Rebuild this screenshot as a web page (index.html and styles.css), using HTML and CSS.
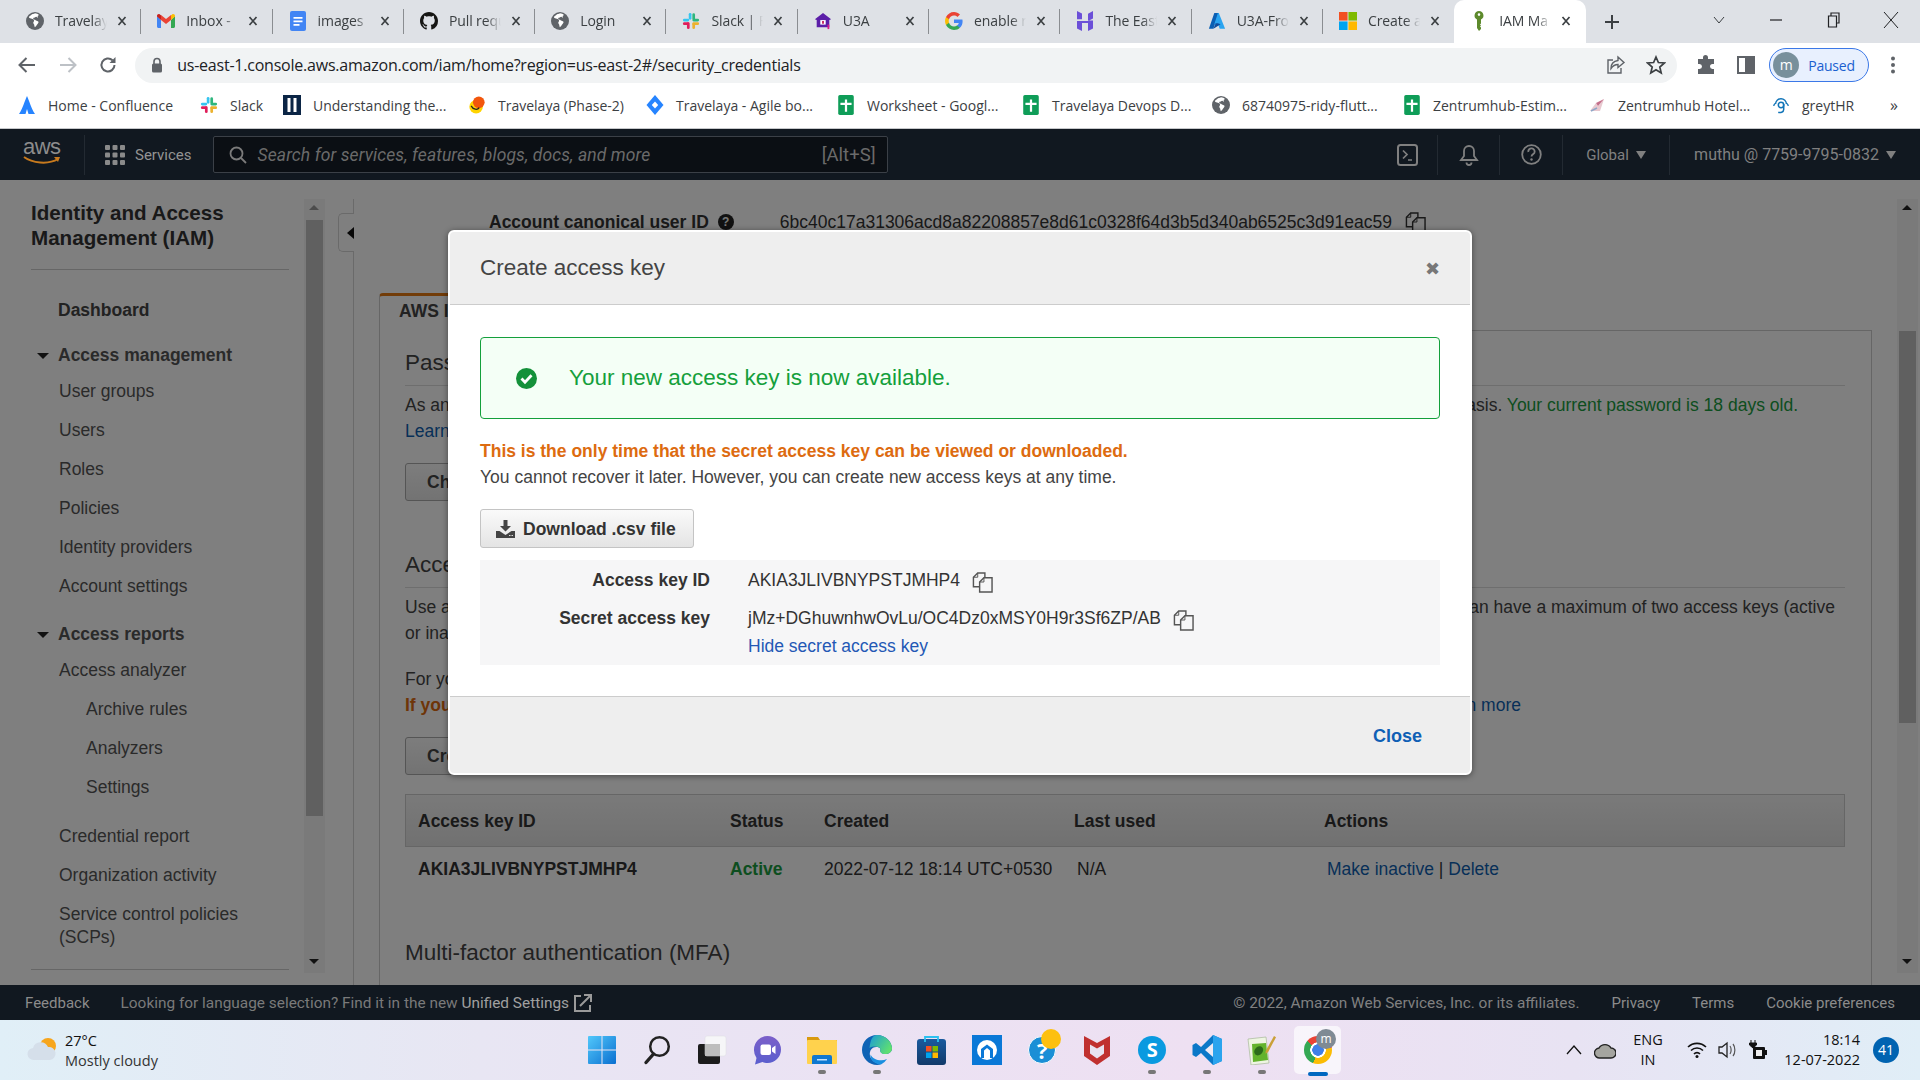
FILE: index.html
```html
<!DOCTYPE html>
<html lang="en">
<head>
<meta charset="utf-8">
<title>IAM Management Console</title>
<link rel="stylesheet" href="styles.css">
</head>
<body>
<svg class="defs" width="0" height="0" aria-hidden="true">
<defs>
<symbol id="i-globe" viewBox="0 0 16 16"><circle cx="8" cy="8" r="8" fill="#5f6368"/><path d="M8 1.2c-1 .8-2.6.6-3.4 1.5-.6.8-1.9 1-2 2 .5 1 1.6 1.1 2.6 1.4.9.3 1.8.5 2 1.5.1.9-.9 1.3-.7 2.2.2.9 1 1.3.9 2.3 0 .5.1 1.1.5 1.4.9-.6 1.4-1.5 2-2.4.5-.7 1.3-1.2 1.2-2.2-.1-.8-1-.9-1.7-1.2-.7-.3-1.2-1-2-.9-.4-.5-1.2-.8-1-1.5.6-.3 1.3 0 1.7-.6.4-.5 1-.7 1.4-.2l1 .5c.4-.5-.2-1-.2-1.5.4-.3.9-.5 1.2-.9C10.700 2 9.300 1.300 8 1.200z" fill="#fff"/></symbol>
<symbol id="i-gmail" viewBox="0 0 18 14"><path d="M0 2v10.500C0 13.300.7 14 1.500 14H4V6L0 2z" fill="#4285f4"/><path d="M18 2v10.500c0 .8-.7 1.500-1.500 1.500H14V6l4-4z" fill="#34a853"/><path d="M4 6V1L9 5l5-4v5l-5 4-5-4z" fill="#ea4335"/><path d="M0 2.500V1.800C0 .3 1.700-.5 2.900.4L4 1.200V6L0 2.500z" fill="#c5221f"/><path d="M18 2.500V1.800c0-1.500-1.700-2.300-2.900-1.400L14 1.200V6l4-3.500z" fill="#fbbc04"/></symbol>
<symbol id="i-docs" viewBox="0 0 16 20"><rect width="16" height="20" rx="2" fill="#4285f4"/><path d="M3.500 6h9v1.700h-9zM3.500 9.500h9v1.700h-9zM3.500 13h6v1.700h-6z" fill="#fff"/></symbol>
<symbol id="i-github" viewBox="0 0 16 16"><path fill="#161614" d="M8 0C3.580 0 0 3.580 0 8c0 3.540 2.290 6.530 5.470 7.590.4.070.55-.17.55-.38 0-.19-.01-.82-.01-1.490-2.010.37-2.530-.49-2.690-.94-.09-.23-.48-.94-.82-1.130-.28-.15-.68-.52-.01-.53.63-.01 1.080.58 1.230.82.72 1.210 1.870.87 2.330.66.07-.52.28-.87.51-1.070-1.780-.2-3.640-.89-3.640-3.950 0-.87.31-1.590.82-2.150-.08-.2-.36-1.020.08-2.120 0 0 .67-.21 2.200.82.64-.18 1.320-.27 2-.27.68 0 1.360.09 2 .27 1.530-1.040 2.200-.82 2.200-.82.44 1.100.16 1.920.08 2.120.51.56.82 1.270.82 2.150 0 3.070-1.870 3.750-3.650 3.950.29.25.54.73.54 1.480 0 1.070-.01 1.930-.01 2.200 0 .21.15.46.55.38A8.013 8.013 0 0016 8c0-4.420-3.580-8-8-8z"/></symbol>
<symbol id="i-slack" viewBox="0 0 20 20"><rect x="7.500" y="1" width="3" height="7.500" rx="1.500" fill="#36c5f0"/><rect x="1" y="7.500" width="7" height="3" rx="1.500" fill="#36c5f0"/><rect x="11.500" y="1.500" width="3" height="7" rx="1.500" fill="#2eb67d"/><rect x="11.500" y="7.500" width="7.500" height="3" rx="1.500" fill="#2eb67d"/><rect x="11.500" y="11.500" width="7.500" height="3" rx="1.500" fill="#ecb22e"/><rect x="11.500" y="12" width="3" height="7" rx="1.500" fill="#ecb22e"/><rect x="1" y="11.500" width="7" height="3" rx="1.500" fill="#e01e5a"/><rect x="5.500" y="11.500" width="3" height="7.500" rx="1.500" fill="#e01e5a"/></symbol>
<symbol id="i-u3a" viewBox="0 0 20 20"><path d="M10 1L1 8l2 1v8h14V9l2-1z" fill="#5b1ea8"/><path d="M7 9h6v5H7z" fill="#fff"/><path d="M9 10h2v3H9z" fill="#c2185b"/><path d="M15 14h2v5h-2z" fill="#d81b8c"/></symbol>
<symbol id="i-google" viewBox="0 0 18 18"><path d="M17.600 9.200c0-.6-.1-1.200-.2-1.800H9v3.500h4.800c-.2 1.100-.8 2-1.800 2.700v2.200h2.900c1.700-1.600 2.700-3.900 2.700-6.600z" fill="#4285f4"/><path d="M9 18c2.400 0 4.500-.8 5.900-2.200L12 13.600c-.8.500-1.800.9-3 .9-2.300 0-4.300-1.600-5-3.700H1v2.300C2.500 16 5.500 18 9 18z" fill="#34a853"/><path d="M4 10.700c-.4-1.100-.4-2.300 0-3.400V5H1c-1.300 2.500-1.300 5.500 0 8l3-2.300z" fill="#fbbc05"/><path d="M9 3.600c1.300 0 2.500.5 3.400 1.300L15 2.400C13.400.9 11.300 0 9 0 5.500 0 2.500 2 1 5l3 2.300c.7-2.100 2.700-3.700 5-3.700z" fill="#ea4335"/></symbol>
<symbol id="i-host" viewBox="0 0 18 20"><path d="M1 0l5 2.600v5.600H1zM17 0v7.500l-5 2.500H1v2h11V20l5-2.600V9.500h-5V2.700zM1 11.500V17.600L6 20v-8.500z" fill="#6b4fd8"/></symbol>
<symbol id="i-azure" viewBox="0 0 20 20"><path d="M7 1h5L6 18.500H1z" fill="#0a5fb4"/><path d="M12 1l7 17.500h-6l-1.800-5H7l4-12.500z" fill="#2aa4f0"/><path d="M6 18.500l8-5-3-1H8.500z" fill="#0f4e9e"/></symbol>
<symbol id="i-ms" viewBox="0 0 20 20"><rect width="9.500" height="9.500" fill="#f25022"/><rect x="10.500" width="9.500" height="9.500" fill="#7fba00"/><rect y="10.500" width="9.500" height="9.500" fill="#00a4ef"/><rect x="10.500" y="10.500" width="9.500" height="9.500" fill="#ffb900"/></symbol>
<symbol id="i-key" viewBox="0 0 12 20"><path d="M6 0a4.500 4.500 0 00-2 8.500V17l2 3 2-2v-1.500l-1-1 1-1-1-1 1-1V8.500A4.500 4.500 0 006 0zm0 2.300a1.300 1.300 0 110 2.600 1.300 1.300 0 010-2.600z" fill="#5d8a2c"/></symbol>
<symbol id="i-close" viewBox="0 0 10 10"><path d="M1.500 1l7 8M8.500 1l-7 8" stroke="#3c4043" stroke-width="1.700" fill="none"/></symbol>
<symbol id="i-sheet" viewBox="0 0 14 18"><rect width="14" height="18" rx="1.500" fill="#0f9d58"/><path d="M6 4h2v3h4v2H8v6H6V9H2V7h4z" fill="#fff"/></symbol>
<symbol id="i-conf" viewBox="0 0 18 20"><path d="M9 1c2 4 4 12 8 18h-6.500L9 14l-1.500 5H1C5 13 7 5 9 1z" fill="#2684ff"/></symbol>
<symbol id="i-under" viewBox="0 0 18 20"><rect width="18" height="20" fill="#0b2545"/><rect x="4.500" y="3" width="3" height="14" fill="#fff"/><rect x="10.500" y="3" width="3" height="14" fill="#fff"/></symbol>
<symbol id="i-trav" viewBox="0 0 20 20"><circle cx="9" cy="12" r="7.500" fill="#ffd400"/><circle cx="12" cy="7" r="6.500" fill="#f2560c"/><path d="M3.500 11c2 4 7 5 9 2" stroke="#222" stroke-width="1.400" fill="none"/></symbol>
<symbol id="i-jira" viewBox="0 0 18 20"><path d="M9 0l8.500 10L9 20 .5 10z" fill="#2684ff"/><path d="M9 6.500l3.200 3.500L9 13.500 5.800 10z" fill="#fff"/></symbol>
<symbol id="i-hotel" viewBox="0 0 18 16"><path d="M2 14L8 6l2 3 6-7-4 12z" fill="#e8c9d0"/><path d="M8 6l8-4-6 7z" fill="#c46f8a"/><path d="M3 14l6-3" stroke="#8fa8c8" stroke-width="1.500"/></symbol>
<symbol id="i-grey" viewBox="0 0 20 20"><path d="M4 9a6 6 0 0112 0M2 11c0-2 1-2 2-3M18 11c0-2-1-2-2-3" stroke="#1275b8" stroke-width="1.500" fill="none"/><circle cx="10" cy="10" r="3" fill="none" stroke="#1275b8" stroke-width="1.700"/><path d="M13 9v6c0 3-4 4-6 3" stroke="#1275b8" stroke-width="1.700" fill="none"/></symbol>
<symbol id="i-copy" viewBox="0 0 22 22"><path d="M8 16H1.500V6L6 1.500h7.500V6" fill="none" stroke="currentColor" stroke-width="1.500"/><path d="M6 1.500V6H1.500" fill="none" stroke="currentColor" stroke-width="1"/><path d="M8 11l4.500-4.500h8.500v15H8z" fill="none" stroke="currentColor" stroke-width="1.500"/><path d="M12.500 6.500V11H8" fill="none" stroke="currentColor" stroke-width="1"/></symbol>
</defs>
</svg>

<div class="chrome-tabs">
  <div class="tab-list">
    <div class="tab"><svg class="tab-ico"><use href="#i-globe"/></svg><span class="tab-label">Travelaya</span><svg class="tab-x"><use href="#i-close"/></svg></div>
    <div class="tab"><svg class="tab-ico"><use href="#i-gmail"/></svg><span class="tab-label">Inbox - </span><svg class="tab-x"><use href="#i-close"/></svg></div>
    <div class="tab"><svg class="tab-ico"><use href="#i-docs"/></svg><span class="tab-label">images</span><svg class="tab-x"><use href="#i-close"/></svg></div>
    <div class="tab"><svg class="tab-ico"><use href="#i-github"/></svg><span class="tab-label">Pull request</span><svg class="tab-x"><use href="#i-close"/></svg></div>
    <div class="tab"><svg class="tab-ico"><use href="#i-globe"/></svg><span class="tab-label">Login</span><svg class="tab-x"><use href="#i-close"/></svg></div>
    <div class="tab"><svg class="tab-ico"><use href="#i-slack"/></svg><span class="tab-label">Slack | F</span><svg class="tab-x"><use href="#i-close"/></svg></div>
    <div class="tab"><svg class="tab-ico"><use href="#i-u3a"/></svg><span class="tab-label">U3A</span><svg class="tab-x"><use href="#i-close"/></svg></div>
    <div class="tab"><svg class="tab-ico"><use href="#i-google"/></svg><span class="tab-label">enable r</span><svg class="tab-x"><use href="#i-close"/></svg></div>
    <div class="tab"><svg class="tab-ico"><use href="#i-host"/></svg><span class="tab-label">The East</span><svg class="tab-x"><use href="#i-close"/></svg></div>
    <div class="tab"><svg class="tab-ico"><use href="#i-azure"/></svg><span class="tab-label">U3A-Front</span><svg class="tab-x"><use href="#i-close"/></svg></div>
    <div class="tab tab-prev"><svg class="tab-ico"><use href="#i-ms"/></svg><span class="tab-label">Create a</span><svg class="tab-x"><use href="#i-close"/></svg></div>
    <div class="tab tab-active"><svg class="tab-ico"><use href="#i-key"/></svg><span class="tab-label">IAM Ma</span><svg class="tab-x"><use href="#i-close"/></svg></div>
  </div>
  <div class="newtab"><svg width="16" height="16" viewBox="0 0 16 16"><path d="M8 1v14M1 8h14" stroke="#3c4043" stroke-width="2"/></svg></div>
  <div class="winctl">
    <span class="wc"><svg width="14" height="14" viewBox="0 0 14 14"><path d="M2 4l5 6 5-6" stroke="#3c4043" fill="none"/></svg></span>
    <span class="wc"><svg width="14" height="14" viewBox="0 0 14 14"><path d="M1 7h12" stroke="#202124" stroke-width="1.200"/></svg></span>
    <span class="wc"><svg width="14" height="16" viewBox="0 0 14 16"><path d="M1.500 4h8v11h-8zM4 4V1h8v10h-2.500" stroke="#202124" stroke-width="1.200" fill="none"/></svg></span>
    <span class="wc"><svg width="16" height="18" viewBox="0 0 16 18"><path d="M1 1l14 16M15 1L1 17" stroke="#202124" stroke-width="1"/></svg></span>
  </div>
</div>

<div class="toolbar">
  <span class="tb-btn"><svg width="18" height="16" viewBox="0 0 18 16"><path d="M17 8H2M8.500 1L1.500 8l7 7" stroke="#5f6368" stroke-width="2" fill="none"/></svg></span>
  <span class="tb-btn"><svg width="18" height="16" viewBox="0 0 18 16"><path d="M1 8h15M9.500 1l7 7-7 7" stroke="#bdc1c6" stroke-width="2" fill="none"/></svg></span>
  <span class="tb-btn"><svg width="18" height="18" viewBox="0 0 18 18"><path d="M15.500 9a6.500 6.500 0 11-2-4.700" stroke="#5f6368" stroke-width="2" fill="none"/><path d="M16.500 1v6h-6z" fill="#5f6368"/></svg></span>
  <div class="omnibox">
    <svg class="lock" width="14" height="16" viewBox="0 0 14 16"><path d="M4 7V4.500a3 3 0 016 0V7" stroke="#5f6368" stroke-width="1.600" fill="none"/><rect x="2" y="6.500" width="10" height="9" rx="1.500" fill="#5f6368"/></svg>
    <span class="url">us-east-1.console.aws.amazon.com/iam/home?region=us-east-2#/security_credentials</span>
    <span class="omni-end">
      <svg width="20" height="20" viewBox="0 0 20 20"><path d="M7 5H2v13h13v-5" stroke="#5f6368" stroke-width="1.400" fill="none"/><path d="M12 2l6 5.500-6 5V9.500c-3 0-5 1-7 4 0-5 3-7.500 7-8z" stroke="#5f6368" stroke-width="1.400" fill="none"/></svg>
      <svg width="20" height="20" viewBox="0 0 20 20"><path d="M10 2l2.400 5.500 6 .5-4.600 4 1.400 6-5.200-3.200L4.800 18l1.400-6L1.600 8l6-.5z" stroke="#3c4043" stroke-width="1.700" fill="none"/></svg>
    </span>
  </div>
  <svg class="puzzle" width="20" height="20" viewBox="0 0 20 20"><path d="M7 2.500a2.500 2.500 0 015 0V4h6v5h-1.500a2.500 2.500 0 000 5H18v5H2v-5h1.500a2.500 2.500 0 000-5H2V4h5z" fill="#5f6368"/></svg>
  <svg class="sidep" width="20" height="20" viewBox="0 0 20 20"><rect x="2" y="2" width="16" height="16" fill="none" stroke="#5f6368" stroke-width="2"/><rect x="9" y="2" width="9" height="16" fill="#5f6368"/><rect x="4" y="4" width="5" height="12" fill="#fff"/></svg>
  <div class="profile"><span class="avatar">m</span><span class="paused">Paused</span></div>
  <svg class="dots" width="6" height="18" viewBox="0 0 6 18"><circle cx="3" cy="2.500" r="2" fill="#5f6368"/><circle cx="3" cy="9" r="2" fill="#5f6368"/><circle cx="3" cy="15.500" r="2" fill="#5f6368"/></svg>
</div>

<div class="bookmarks">
  <a class="bm"><svg class="bm-ico"><use href="#i-conf"/></svg>Home - Confluence</a>
  <a class="bm"><svg class="bm-ico"><use href="#i-slack"/></svg>Slack</a>
  <a class="bm"><svg class="bm-ico"><use href="#i-under"/></svg>Understanding the...</a>
  <a class="bm"><svg class="bm-ico"><use href="#i-trav"/></svg>Travelaya (Phase-2)</a>
  <a class="bm"><svg class="bm-ico"><use href="#i-jira"/></svg>Travelaya - Agile bo...</a>
  <a class="bm"><svg class="bm-ico"><use href="#i-sheet"/></svg>Worksheet - Googl...</a>
  <a class="bm"><svg class="bm-ico"><use href="#i-sheet"/></svg>Travelaya Devops D...</a>
  <a class="bm"><svg class="bm-ico"><use href="#i-globe"/></svg>68740975-ridy-flutt...</a>
  <a class="bm"><svg class="bm-ico"><use href="#i-sheet"/></svg>Zentrumhub-Estim...</a>
  <a class="bm"><svg class="bm-ico"><use href="#i-hotel"/></svg>Zentrumhub Hotel...</a>
  <a class="bm"><svg class="bm-ico"><use href="#i-grey"/></svg>greytHR</a>
  <a class="bm bm-more">»</a>
</div>

<nav class="awsnav">
  <div class="aws-logo">
    <span class="aws-word">aws</span>
    <svg width="38" height="9" viewBox="0 0 38 9"><path d="M1 1c8 6 24 8 34 2" stroke="#c77a1e" stroke-width="2" fill="none"/><path d="M31 1l6 0-2 5z" fill="#c77a1e"/></svg>
  </div>
  <div class="aws-services">
    <svg width="20" height="20" viewBox="0 0 20 20"><g fill="#8a8a8a"><rect width="5" height="5" rx="1"/><rect x="7.500" width="5" height="5" rx="1"/><rect x="15" width="5" height="5" rx="1"/><rect y="7.500" width="5" height="5" rx="1"/><rect x="7.500" y="7.500" width="5" height="5" rx="1"/><rect x="15" y="7.500" width="5" height="5" rx="1"/><rect y="15" width="5" height="5" rx="1"/><rect x="7.500" y="15" width="5" height="5" rx="1"/><rect x="15" y="15" width="5" height="5" rx="1"/></g></svg>
    <span>Services</span>
  </div>
  <div class="aws-search">
    <svg width="18" height="18" viewBox="0 0 18 18"><circle cx="7.500" cy="7.500" r="6" stroke="#7b7b7b" stroke-width="1.800" fill="none"/><path d="M12 12l5 5" stroke="#7b7b7b" stroke-width="1.800"/></svg>
    <span class="aws-ph">Search for services, features, blogs, docs, and more</span>
    <span class="aws-hint">[Alt+S]</span>
  </div>
  <div class="nav-cell nav-term"><svg width="21" height="22" viewBox="0 0 21 22"><rect x="1" y="1" width="19" height="20" rx="2.500" stroke="#808080" stroke-width="2" fill="none"/><path d="M6 6.500l4 4-4 4M11 16h4" stroke="#808080" stroke-width="1.700" fill="none"/></svg></div>
  <div class="nav-cell nav-bell"><svg width="20" height="22" viewBox="0 0 20 22"><path d="M10 2a5 5 0 00-5 5v5l-3 4h16l-3-4V7a5 5 0 00-5-5z" stroke="#808080" stroke-width="1.800" fill="none"/><path d="M7.500 18.500a2.500 2.500 0 005 0" stroke="#808080" stroke-width="1.800" fill="none"/></svg></div>
  <div class="nav-cell nav-help"><svg width="21" height="21" viewBox="0 0 21 21"><circle cx="10.500" cy="10.500" r="9.300" stroke="#808080" stroke-width="1.800" fill="none"/><path d="M7.300 8a3.200 3.200 0 116 1c-.7 1-2.800 1.500-2.800 3.500" stroke="#808080" stroke-width="1.800" fill="none"/><circle cx="10.500" cy="15.500" r="1.200" fill="#808080"/></svg></div>
  <div class="nav-cell nav-global"><span>Global</span><i class="caret"></i></div>
  <div class="nav-cell nav-user"><span>muthu @ 7759-9795-0832</span><i class="caret"></i></div>
</nav>

<main class="console">
  <aside class="sidebar">
    <div class="side-col">
      <h2 class="side-title">Identity and Access Management (IAM)</h2>
      <a class="side-dash">Dashboard</a>
      <div class="side-head"><i class="side-tri"></i>Access management</div>
      <a class="side-item">User groups</a>
      <a class="side-item">Users</a>
      <a class="side-item">Roles</a>
      <a class="side-item">Policies</a>
      <a class="side-item">Identity providers</a>
      <a class="side-item">Account settings</a>
      <div class="side-head side-head2"><i class="side-tri"></i>Access reports</div>
      <a class="side-item">Access analyzer</a>
      <a class="side-item side-sub">Archive rules</a>
      <a class="side-item side-sub">Analyzers</a>
      <a class="side-item side-sub">Settings</a>
      <a class="side-item side-gap">Credential report</a>
      <a class="side-item">Organization activity</a>
      <a class="side-item side-two">Service control policies (SCPs)</a>
      <div class="side-end"></div>
    </div>
    <div class="scroll scroll-side"><i class="sc-up"></i><div class="sc-thumb sc-thumb-side"></div><i class="sc-down"></i></div>
  </aside>
  <div class="collapse-col"><div class="collapse-tab"><i class="tri-left"></i></div></div>
  <section class="content">
    <div class="canon"><b class="canon-label">Account canonical user ID</b><span class="qmark">?</span><span class="canon-val">6bc40c17a31306acd8a82208857e8d61c0328f64d3b5d340ab6525c3d91eac59</span><svg class="copy-dim"><use href="#i-copy"/></svg></div>
    <div class="tabhead"><b>AWS IAM credentials</b></div>
    <div class="panel">
      <h3 class="sec sec-first">Password</h3>
      <p class="line line-first line-pass"><span>As an IAM user, you can change your password on a regular</span><span>basis. <span class="okgreen">Your current password is 18 days old.</span></span></p>
      <p class="line"><a class="lnk">Learn more</a></p>
      <div class="btn btn-a"><b>Change password</b></div>
      <h3 class="sec sec-next">Access keys</h3>
      <p class="line line-first line-keys"><span>Use access keys to make programmatic calls to AWS. You c</span><span>an have a maximum of two access keys (active</span></p>
      <p class="line">or inactive) at a time.</p>
      <p class="line line-para">For your protection, you should never share your secret keys with anyone.</p>
      <p class="line line-warn"><b class="warn">If you lose or forget your secret key, you cannot retrieve it.</b><a class="lnk">Learn more</a></p>
      <div class="btn btn-b"><b>Create access key</b></div>
      <div class="keytable">
        <div class="ktr kth"><span>Access key ID</span><span>Status</span><span>Created</span><span>Last used</span><span>Actions</span></div>
        <div class="ktr ktd"><b>AKIA3JLIVBNYPSTJMHP4</b><b class="okgreen">Active</b><span>2022-07-12 18:14 UTC+0530</span><span class="nudge">N/A</span><span class="nudge"><a class="lnk">Make inactive</a> | <a class="lnk">Delete</a></span></div>
      </div>
      <h3 class="sec sec-mfa">Multi-factor authentication (MFA)</h3>
    </div>
  </section>
  <div class="scroll scroll-main"><i class="sc-up"></i><div class="sc-thumb sc-thumb-main"></div><i class="sc-down"></i></div>

  <div class="backdrop"></div>
  <div class="modal">
    <header class="m-head"><h4>Create access key</h4><span class="m-x">✖</span></header>
    <div class="m-body">
      <div class="m-success">
        <svg width="21" height="21" viewBox="0 0 21 21"><circle cx="10.500" cy="10.500" r="10.500" fill="#14913a"/><path d="M5.500 10.500l3.500 3.800 6.500-7" stroke="#fff" stroke-width="2.800" fill="none"/></svg>
        <span>Your new access key is now available.</span>
      </div>
      <p class="m-warn">This is the only time that the secret access key can be viewed or downloaded.</p>
      <p class="m-note">You cannot recover it later. However, you can create new access keys at any time.</p>
      <div class="m-download">
        <svg width="19" height="18" viewBox="0 0 19 18"><path d="M7.500 0h4v6h3.500l-5.500 5.500L4 6h3.500z" fill="#444"/><path d="M0 11h3.500l6 4 6-4H19v7H0z" fill="#444"/><path d="M13 15.500h1.500M15.500 15.500H17" stroke="#ddd"/></svg>
        <b>Download .csv file</b>
      </div>
      <div class="m-keys">
        <b class="m-lab">Access key ID</b>
        <div class="m-val">AKIA3JLIVBNYPSTJMHP4<svg class="m-copy"><use href="#i-copy"/></svg></div>
        <b class="m-lab">Secret access key</b>
        <div class="m-val">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<svg class="m-copy"><use href="#i-copy"/></svg></div>
        <span></span>
        <a class="m-hide">Hide secret access key</a>
      </div>
    </div>
    <footer class="m-foot"><b class="m-close">Close</b></footer>
  </div>
</main>

<footer class="awsfoot">
  <span class="f-fb">Feedback</span>
  <span class="f-lang">Looking for language selection? Find it in the new <em>Unified Settings</em></span>
  <svg class="f-ext" width="20" height="20" viewBox="0 0 20 20"><path d="M8 3H2v15h15v-6" stroke="#9a9a9a" stroke-width="2" fill="none"/><path d="M7 13L17 3M11 2h7v7" stroke="#9a9a9a" stroke-width="2" fill="none"/></svg>
  <span class="f-copy">© 2022, Amazon Web Services, Inc. or its affiliates.</span>
  <span class="f-link">Privacy</span>
  <span class="f-link">Terms</span>
  <span class="f-link">Cookie preferences</span>
</footer>

<div class="taskbar">
  <div class="weather">
    <svg class="w-ico" width="30" height="24" viewBox="0 0 30 24"><circle cx="21" cy="9" r="8" fill="#f7a51c"/><path d="M7 23a6 6 0 01-1-12 8 8 0 0115-1 6.500 6.500 0 012 13z" fill="#d5dfea"/></svg>
    <div class="w-text"><span>27°C</span><span>Mostly cloudy</span></div>
  </div>
  <div class="apps">
    <div class="app"><svg width="30" height="30" viewBox="0 0 30 30"><defs><linearGradient id="g-start" x1="0" y1="0" x2="1" y2="1"><stop offset="0" stop-color="#52c8fb"/><stop offset="1" stop-color="#0a6fd0"/></linearGradient></defs><path d="M1 2a1 1 0 011-1h12.500v13.500H1zM15.500 1H28a1 1 0 011 1v12.500H15.500zM1 15.500h13.500V29H2a1 1 0 01-1-1zM15.500 15.500H29V28a1 1 0 01-1 1H15.500z" fill="url(#g-start)"/></svg></div>
    <div class="app"><svg width="30" height="30" viewBox="0 0 30 30"><circle cx="17.500" cy="11.500" r="9.300" stroke="#222" stroke-width="2.500" fill="none"/><path d="M11.500 19L4 27.500" stroke="#222" stroke-width="3.400" stroke-linecap="round"/></svg></div>
    <div class="app"><svg width="30" height="30" viewBox="0 0 30 30"><rect x="1" y="9" width="22" height="20" rx="2" fill="#1c1c1c"/><rect x="8" y="1" width="21" height="20" rx="2" fill="#f6f6f8" stroke="#dcdce2" stroke-width=".5"/><rect x="8" y="9" width="15" height="12" fill="#bdbdbd"/></svg></div>
    <div class="app"><svg width="30" height="30" viewBox="0 0 30 30"><defs><linearGradient id="g-chat" x1="0" y1="0" x2="0" y2="1"><stop offset="0" stop-color="#7b5fc9"/><stop offset="1" stop-color="#5a5fce"/></linearGradient></defs><path d="M15.500 1A13.500 13.500 0 0129 14.500 13.500 13.500 0 0115.500 28c-2 0-3.500-.3-5-1L3 29.500l1.500-6.500A13.500 13.500 0 012 14.500 13.500 13.500 0 0115.500 1z" fill="url(#g-chat)"/><rect x="8.500" y="9.500" width="10.500" height="10.500" rx="2" fill="#fff"/><path d="M20 13l3.500-2.500v8.500L20 16.500z" fill="#fff"/></svg></div>
    <div class="app"><svg width="30" height="30" viewBox="0 0 30 30"><path d="M0 2h11l2 3h17v4H0z" fill="#d99a0e"/><rect y="5" width="30" height="24" rx="1" fill="#ffd24d"/><path d="M5 22a2 2 0 012-2h16a2 2 0 012 2v7H5z" fill="#0f78d0"/><rect x="10" y="24" width="10" height="1.500" fill="#bfe2ff"/></svg><i class="dot"></i></div>
    <div class="app"><svg width="30" height="30" viewBox="0 0 30 30"><defs><linearGradient id="g-edge" x1="0" y1="0" x2="1" y2=".6"><stop offset="0" stop-color="#1a9ad8"/><stop offset="1" stop-color="#5fe070"/></linearGradient></defs><path d="M15 0c8.500 0 15 6.500 15 13.500 0 3.500-3 5.500-7 5.500-3.500 0-5.500-2-4.500-5-2-3-8-2.500-10 1.500C6 21 10 28 19 29.500 9 32 0 24.500 0 15 0 6.500 6.500 0 15 0z" fill="#0f63b5"/><path d="M15 0c8.500 0 15 6.500 15 13.500 0 3.500-3 5.500-7 5.500-3.500 0-5.500-2-4.500-5-2-3-7.500-3-11-1C8.500 5.500 10 0 15 0z" fill="url(#g-edge)"/><path d="M25 24a14 14 0 01-6 5.500c-6.500-.5-11-4.500-10.500-10 2.500 5 10 7.500 16.500 4.500z" fill="#1a8fe0"/></svg><i class="dot"></i></div>
    <div class="app"><svg width="30" height="30" viewBox="0 0 30 30"><defs><linearGradient id="g-store" x1="0" y1="0" x2="0" y2="1"><stop offset="0" stop-color="#1a5a9e"/><stop offset="1" stop-color="#123a6a"/></linearGradient></defs><rect y="4" width="29" height="26" rx="3" fill="url(#g-store)"/><path d="M8 7V2h13v5" stroke="#2bc0f0" stroke-width="1.800" fill="none"/><rect x="9" y="11" width="5.500" height="5.500" fill="#f25022"/><rect x="15.500" y="11" width="5.500" height="5.500" fill="#7fba00"/><rect x="9" y="17.500" width="5.500" height="5.500" fill="#00a4ef"/><rect x="15.500" y="17.500" width="5.500" height="5.500" fill="#ffb900"/></svg></div>
    <div class="app"><svg width="30" height="30" viewBox="0 0 30 30"><rect width="30" height="30" fill="#0a78d7"/><circle cx="15" cy="15" r="10" fill="#fff"/><path d="M9 23v-9l6-4.500 6 4.500v9h-3v-7.500L15 13l-3 2.500V23z" fill="#0a78d7"/></svg></div>
    <div class="app"><span class="help">?</span><i class="help-b"></i></div>
    <div class="app"><svg width="30" height="30" viewBox="0 0 30 30"><path d="M2 1l13 7 13-7v20l-13 9-13-9z" fill="#c0302f"/><path d="M8 9.500l7 4 7-4v9l-7 5-7-5z" fill="#e8e2f0"/></svg></div>
    <div class="app"><span class="skype">S</span><i class="dot"></i></div>
    <div class="app"><svg width="30" height="30" viewBox="0 0 30 30"><path d="M21 0l9 4v22l-9 4L9 18l-5 4-3.500-2V10L4 8l5 4z" fill="#0a78c8"/><path d="M21 8L13 15l8 7z" fill="#edeaf5"/><path d="M21 0l9 4v22l-9 4z" fill="#2ba4ee"/></svg><i class="dot"></i></div>
    <div class="app"><svg width="30" height="30" viewBox="0 0 30 30"><path d="M1 4l18-2 3 26L4 30z" fill="#eef5e2" stroke="#a8b89a" stroke-width=".7"/><path d="M5 9l14-1 2 17-15 2z" fill="#63b32c"/><path d="M10 12c3-2 7 0 6 4s-6 6-8 3 0-5 2-7z" fill="#2c6b1a"/><path d="M27 1l2 1.200-8 15-2.500 1.500.2-2.800z" fill="#caa038"/></svg><i class="dot"></i></div>
    <div class="app app-active"><span class="chrome-ico"></span><span class="m-badge">m</span><i class="bar"></i></div>
  </div>
  <div class="tray">
    <span class="t-chev"><svg width="16" height="10" viewBox="0 0 16 10"><path d="M1 9l7-8 7 8" stroke="#111" stroke-width="1.300" fill="none"/></svg></span>
    <span class="t-cloud"><svg width="22" height="20" viewBox="0 0 22 20"><path d="M6 18a5 5 0 01-1-10 7 7 0 0112 0 5 5 0 010 10z" fill="#a5a5a0" stroke="#222" stroke-width="1.400"/></svg></span>
    <div class="t-lang"><span>ENG</span><span>IN</span></div>
    <span class="t-wifi"><svg width="20" height="18" viewBox="0 0 20 18"><path d="M1 6a13 13 0 0118 0M4 9.500a8.500 8.500 0 0112 0M7 13a4 4 0 016 0" stroke="#111" stroke-width="1.600" fill="none"/><circle cx="10" cy="15.500" r="1.500" fill="#111"/></svg></span>
    <span class="t-vol"><svg width="20" height="18" viewBox="0 0 20 18"><path d="M1 6h3l5-4v14l-5-4H1z" fill="none" stroke="#222" stroke-width="1.300"/><path d="M12 5c1.500 2 1.500 6 0 8M15 3c2.500 3 2.500 9 0 12" stroke="#555" stroke-width="1.200" fill="none"/></svg></span>
    <span class="t-bat"><svg width="20" height="22" viewBox="0 0 20 22"><rect x="5" y="8" width="12" height="12" rx="1" fill="#111"/><rect x="8" y="11" width="6" height="6" fill="#eee"/><path d="M17 11h2v5h-2z" fill="#111"/><path d="M3 1v3M7 1v3M1.500 4h7v2L5 9 1.500 6z" stroke="#111" fill="#111"/></svg></span>
    <div class="t-time"><span>18:14</span><span>12-07-2022</span></div>
    <span class="t-badge-cell"><span class="t-badge">41</span></span>
  </div>
</div>
</body>
</html>
```
FILE: styles.css
```css
*{box-sizing:border-box}
html,body{margin:0;padding:0}
body{width:1920px;height:1080px;overflow:hidden;display:flex;flex-direction:column;font-family:"Liberation Sans",Arial,sans-serif;background:#fff}
.defs{position:absolute}
svg{display:block;flex:none}
p,h2,h3,h4{margin:0;font-weight:normal}
i{font-style:normal}

/* chrome tab strip */
.chrome-tabs{height:43px;flex:none;background:#dee1e6;display:flex;padding-left:10px}
.tab-list{display:grid;grid-template-columns:repeat(12,131.3px);height:43px}
.tab{display:flex;align-items:center;padding-left:16px;position:relative;font:14px "Open Sans",sans-serif;color:#3c4043}
.tab:not(.tab-active):not(.tab-prev)::after{content:"";position:absolute;right:0;top:9px;height:25px;width:1px;background:#8a8d91}
.tab-active{background:#fff;border-radius:10px 10px 0 0}
.tab-ico{width:18px;height:20px;margin-top:-1px}
.tab-label{width:52px;margin:-3px 0 0 11px;overflow:hidden;white-space:pre;-webkit-mask-image:linear-gradient(90deg,#000 72%,transparent);mask-image:linear-gradient(90deg,#000 72%,transparent);letter-spacing:-.1px}
.tab-x{width:10px;height:12px;margin-left:10px;margin-top:-1px}
.newtab{width:50px;margin-left:1px;display:flex;align-items:center;justify-content:center}
.winctl{margin-left:auto;display:grid;grid-template-columns:repeat(4,57.5px)}
.wc{display:flex;align-items:center;justify-content:center;height:40px}

/* toolbar */
.toolbar{height:44px;flex:none;background:#fff;display:flex;align-items:center;padding-left:7px}
.tb-btn{width:40.4px;display:flex;justify-content:center}
.omnibox{width:1542px;height:35px;margin:0 0 0 7px;border-radius:18px;background:#f1f3f4;display:flex;align-items:center;padding:0 11px 0 15px}
.url{margin-left:13px;font:16px/1 "Open Sans",sans-serif;letter-spacing:-.22px;color:#202124;white-space:nowrap}
.omni-end{margin-left:auto;display:flex;gap:20px}
.puzzle{margin-left:19px}
.sidep{margin-left:20px}
.profile{margin-left:13px;width:100px;height:34px;border-radius:17px;border:1.5px solid #3b78e7;background:#e8f0fe;display:flex;align-items:center;padding-left:3px;gap:9px}
.avatar{width:26px;height:26px;border-radius:50%;background:#78909c;color:#fff;font:14px/26px "Open Sans",sans-serif;text-align:center}
.paused{font:14px "Open Sans",sans-serif;color:#1a5fd0;letter-spacing:-.2px}
.dots{margin-left:21px}

/* bookmarks */
.bookmarks{height:42px;flex:none;padding-bottom:5px;border-bottom:1px solid #c6c8cb;background:#fff;display:grid;grid-template-columns:18px 182px 83px 185px 178px 191px 185px 190px 191px 185px 184px 108px 40px;align-items:center;font:14px "Open Sans",sans-serif;color:#3c4043}
.bm{display:flex;align-items:center;gap:12px;white-space:nowrap}
.bm:first-child{grid-column:2}
.bm-ico{width:18px;height:20px}
.bm-more{justify-content:flex-end;padding-right:22px;font-size:16px}

/* aws nav */
.awsnav{height:51px;flex:none;background:#111820;display:flex;align-items:center;color:#808080;font:15px Roboto,sans-serif}
.aws-logo{width:85px;height:40px;padding-left:23px;border-right:1px solid #232a32;display:flex;flex-direction:column}
.aws-word{font:22px/20px "Liberation Sans",sans-serif;color:#8c8c8c;letter-spacing:-.5px;margin-top:2px}
.aws-logo svg{margin-top:-1px}
.aws-services{display:flex;align-items:center;gap:10px;margin-left:20px;font-size:15px;color:#939393}
.aws-search{margin-left:21px;width:675px;height:37px;background:#0b0f14;border:1px solid #3b4047;border-radius:2px;display:flex;align-items:center;padding:0 11px 0 15px;color:#6a6a6a}
.aws-ph{margin-left:11px;font-style:italic;font-size:17.500px;letter-spacing:.1px}
.aws-hint{margin-left:auto;font-size:18.500px}
.nav-cell{height:40px;display:flex;align-items:center;justify-content:center;border-right:1px solid #232a32}
.nav-term{width:61px;margin-left:auto}
.nav-bell{width:62px}
.nav-help{width:63px}
.nav-global{width:107px;gap:7px}
.nav-user{width:250px;border:0;gap:7px;font-size:16px}
.caret{width:0;height:0;border:5.500px solid transparent;border-top:8px solid #808080;border-bottom:0}

/* console */
.console{height:805px;flex:none;display:flex;position:relative;overflow:hidden;background:#fff;font-size:17.500px;color:#444;line-height:26px}
.sidebar{width:325px;flex:none;display:flex;align-items:flex-start;padding:0 0 0 31px}
.side-col{width:258px;flex:none;padding-top:20px}
.side-title{font-size:20.600px;line-height:25px;font-weight:bold;color:#333;padding-bottom:19px;border-bottom:1px solid #ccc}
.side-dash{display:block;font-weight:bold;height:39px;line-height:39px;margin:21px 0 0 27px;color:#444}
.side-head{position:relative;font-weight:bold;height:36px;line-height:36px;margin:7px 0 -1px 27px;color:#555}
.side-head2{margin-top:10px}
.side-tri{position:absolute;left:-21px;top:16px;border:6px solid transparent;border-top:6px solid #222;border-bottom:0}
.side-item{display:block;height:39px;line-height:39px;margin-left:28px;color:#555}
.side-sub{margin-left:55px}
.side-gap{margin-top:10px}
.side-two{height:62px;line-height:23px;padding-top:8px}
.side-end{margin-top:12px;border-top:1px solid #ccc;height:1px}
.scroll{flex:none;background:#f4f4f4;display:flex;flex-direction:column;align-items:center;position:relative}
.scroll-side{width:21px;height:774px;margin:19px 0 0 15px}
.scroll-main{width:21px;height:774px;margin:19px 2px 0 0}
.sc-thumb{width:17px;background:#c1c1c1;position:absolute;left:2px}
.sc-thumb-side{top:21px;height:596px}
.sc-thumb-main{top:132px;height:392px}
.sc-up,.sc-down{position:absolute;left:5px;border:5.500px solid transparent}
.sc-up{top:6px;border-bottom:5px solid #555;border-top:0}
.sc-down{bottom:9px;border-top:5px solid #222;border-bottom:0}
.scroll-main .sc-up{border-bottom-color:#222}
.scroll-side .sc-up{border-bottom-color:#999}
.collapse-col{width:29px;flex:none;height:793px;border-right:1px solid #d5d5d5;margin-top:19px;padding-top:14px;padding-left:13px}
.collapse-tab{width:16px;height:39px;border:1px solid #d5d5d5;border-right:0;border-radius:5px 0 0 5px;display:flex;align-items:center;justify-content:flex-end;background:#fff}
.tri-left{border:6px solid transparent;border-right:7px solid #111;border-left:0}
.content{flex:1;min-width:0;padding:0 25px}
.canon{display:flex;align-items:center;height:23px;margin-top:30px;padding-left:110px;white-space:nowrap;color:#333}
.canon-label{color:#333}
.qmark{width:16px;height:16px;border-radius:50%;background:#222;color:#eee;font:bold 12px/16px "Liberation Sans",sans-serif;text-align:center;margin-left:9px}
.canon-val{margin-left:46px}
.copy-dim{width:21px;height:22px;margin-left:13px;color:#333}
.tabhead{width:300px;height:38px;margin:60px 0 -1px;border-top:3px solid #e47911;border-left:1px solid #ccc;border-right:1px solid #ccc;border-radius:4px 4px 0 0;line-height:31px;padding-left:19px;color:#444;background:#fff;position:relative}
.panel{border:1px solid #ccc;border-bottom:0;height:700px;padding:17px 26px 0 25px}
.sec{font-size:22.500px;line-height:30px;color:#444;border-bottom:1px solid #ddd;padding-bottom:7px}
.sec-next{margin-top:49px}
.sec-mfa{margin-top:47px;border:0}
.line{white-space:nowrap;color:#444}
.line-first{margin-top:6px}
.line-pass{display:flex;justify-content:space-between;padding-right:47px}
.line-keys{display:flex;justify-content:space-between;padding-right:10px;margin-top:6px}
.line-para{margin-top:20px}
.line-warn{display:flex;justify-content:space-between;padding-right:324px}
.warn{color:#dd6b10}
.okgreen{color:#1a9c3e}
.lnk{color:#0f5fb0}
.btn{width:220px;border:1px solid #aaa;border-radius:3px;background:linear-gradient(#fafafa,#e6e6e6);padding-left:21px;color:#444;display:flex;align-items:center}
.btn-a{height:38px;margin-top:19px}
.btn-b{height:38px;margin-top:19px}
.keytable{margin-top:19px}
.ktr{display:grid;grid-template-columns:312px 94px 250px 250px 1fr;align-items:center}
.kth{height:53px;padding-left:12px;background:linear-gradient(#f4f4f4,#e2e2e2);border:1px solid #ccc;font-weight:bold;color:#333}
.ktd{height:44px;padding-left:13px;color:#333}
.nudge{margin-left:3px}

/* dim layer + modal */
.backdrop{position:absolute;inset:0;background:rgba(0,0,0,.5);z-index:5}
.modal{position:absolute;z-index:6;left:448px;top:50px;width:1024px;border:2px solid #fff;border-radius:6px;background:#fff;box-shadow:0 1px 6px rgba(0,0,0,.45);color:#444;overflow:hidden}
.m-head{height:73px;background:#eee;border-bottom:1px solid #ccc;display:flex;align-items:center;justify-content:space-between;padding:0 30px}
.m-head h4{font-size:22.500px;color:#444}
.m-x{font-size:18px;color:#777;margin:2px 0 0}
.m-body{padding:32px 30px 31px 30px}
.m-success{height:82px;border:1.500px solid #14a03c;border-radius:4px;background:#f4fff6;display:flex;align-items:center;padding-left:35px;gap:32px;color:#14a03c;font-size:22.500px}
.m-warn{margin-top:19px;font-weight:bold;color:#dd6b10;font-size:17.500px}
.m-download{margin-top:19px;width:214px;height:39px;border:1px solid #c4c4c4;border-radius:3px;background:linear-gradient(#fafafa,#e4e4e4);display:flex;align-items:center;padding-left:15px;gap:8px;color:#333}
.m-keys{margin-top:12px;height:105px;padding-top:7px;background:#f6f6f7;display:grid;grid-template-columns:230px 1fr;column-gap:38px;grid-template-rows:26px 26px 26px;row-gap:12px;color:#333}
.m-lab{text-align:right}
.m-val{display:flex;align-items:center;color:#333}
.m-hide{margin-top:-10px;color:#2358b5}
.m-copy{width:21px;height:22px;margin:3px 0 0 12px;color:#555}
.m-foot{height:77px;background:#eee;border-top:1px solid #ccc;display:flex;align-items:center;justify-content:flex-end;padding:2px 48px 0 0}
.m-close{color:#0f5fb5;font-size:18px}

/* aws footer */
.awsfoot{height:35px;flex:none;background:#111820;display:flex;align-items:center;padding:0 25px;color:#7a7a7a;font:15px Roboto,sans-serif}
.f-fb{color:#8b8b8b}
.f-lang{margin-left:31px;font-size:15.400px}
.f-lang em{font-style:normal;color:#a0a0a0}
.f-ext{margin-left:4px}
.f-copy{margin-left:auto;color:#808080;font-size:15.400px}
.f-link{margin-left:32px;color:#8b8b8b}

/* taskbar */
.taskbar{height:60px;flex:none;display:flex;background:linear-gradient(90deg,#e0eff7 0%,#e8e6f3 25%,#ebe2f3 45%,#eee0f2 62%,#e8e3f3 82%,#e0eef7 100%);font:14px "Open Sans",sans-serif;color:#111}
.weather{width:574px;flex:none;display:flex;padding:11px 0 0 27px;gap:8px}
.w-ico{margin-top:6px}
.w-text{display:flex;flex-direction:column;line-height:20px;font-size:14.500px}
.w-text span+span{color:#333}
.apps{display:flex}
.app{width:55.080px;display:flex;flex-direction:column;align-items:center;padding-top:15px;position:relative}
.dot{width:8px;height:4px;border-radius:2px;background:#777;margin-top:5px}
.app-active::before{content:"";position:absolute;left:4px;right:4px;top:6px;height:48px;background:rgba(255,255,255,.65);border-radius:5px}
.chrome-ico{position:relative;width:28px;height:28px;margin:1px 0;border-radius:50%;background:radial-gradient(circle,#3f7fe8 0 5.500px,#fff 6px 7.500px,transparent 8px),conic-gradient(#ea4335 0 80deg,#fbbc04 80deg 200deg,#34a853 200deg 310deg,#ea4335 310deg)}
.m-badge{position:absolute;left:26px;top:9px;width:20px;height:20px;border-radius:50%;background:#7f8a94;color:#fff;font-size:12px;line-height:19px;text-align:center}
.bar{position:relative;width:20px;height:4px;border-radius:2px;background:#0067c0;margin-top:7px}
.help{width:28px;height:28px;margin:1px 0;border-radius:50%;background:#1b8fd6;border:1px solid #fff;color:#fff;font:bold 22px/26px "Open Sans",sans-serif;text-align:center}
.help-b{position:absolute;left:26px;top:9px;width:20px;height:20px;border-radius:50%;background:#fdc00f}
.skype{width:28px;height:28px;margin:1px 0;border-radius:50%;background:#0a9ae0;color:#fff;font:bold 20px/28px "Open Sans",sans-serif;text-align:center}
.tray{margin-left:auto;display:flex;align-items:center;height:60px}
.tray>span{display:flex;justify-content:center;align-items:center}
.t-chev{width:30px}
.t-cloud{width:32px}
.t-lang{width:54px;display:flex;flex-direction:column;align-items:center;line-height:20px;font-size:14.500px}
.t-wifi{width:37px;margin-left:3px}
.t-vol{width:26px}
.t-bat{width:34px}
.t-time{width:85px;display:flex;flex-direction:column;align-items:flex-end;line-height:20px;font-size:14.500px}
.t-badge-cell{width:60px}
.t-badge{width:26px;height:26px;border-radius:50%;background:#0063b1;color:#fff;font-size:14px;line-height:26px;text-align:center;display:block;margin-right:8px}
```
